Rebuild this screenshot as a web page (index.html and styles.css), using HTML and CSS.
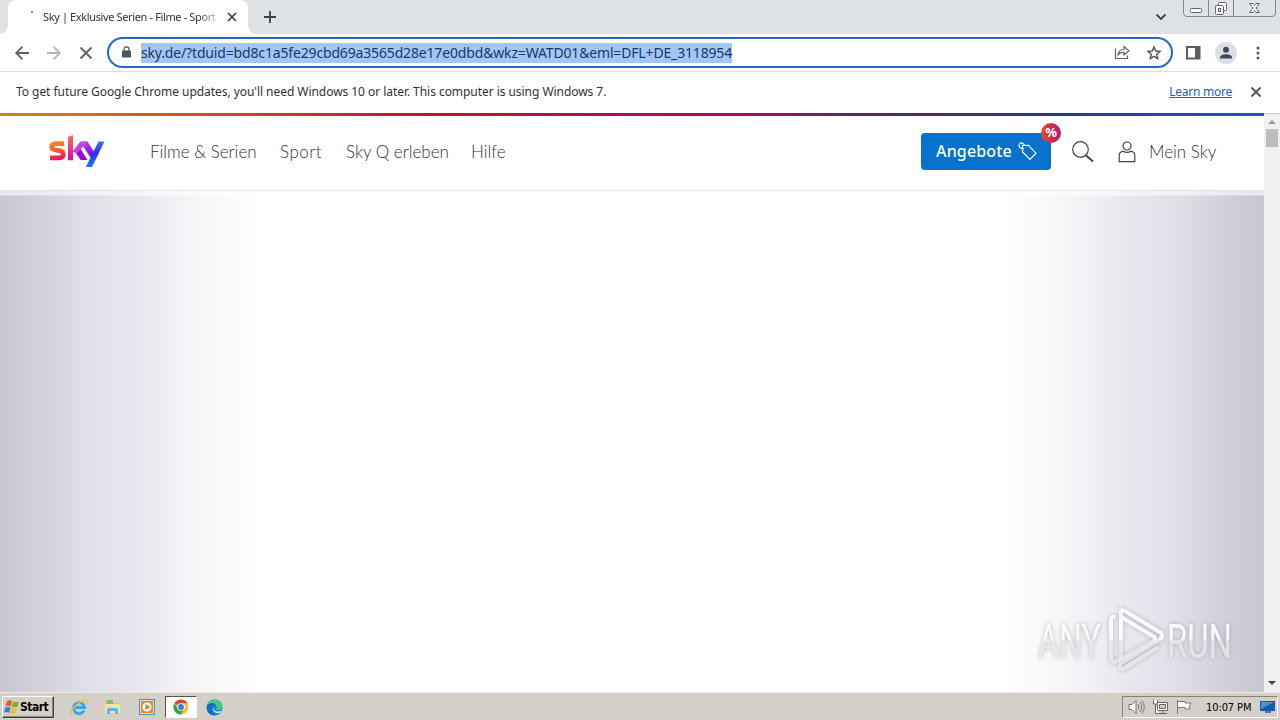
FILE: index.html
```html
<!DOCTYPE html>
<html lang="de">
<head>
<meta charset="utf-8">
<title>Sky | Exklusive Serien - Filme - Sport</title>
<link rel="stylesheet" href="styles.css">
</head>
<body>
<div class="tabstrip">
  <div class="tab">
    <span class="spinner"></span>
    <span class="tab-title">Sky | Exklusive Serien - Filme - Sport</span>
    <svg class="tab-close" width="10" height="10" viewBox="0 0 10 10"><path d="M1 1l8 8M9 1l-8 8" stroke="#3c4043" stroke-width="1.700"/></svg>
  </div>
  <svg class="new-tab" width="14" height="14" viewBox="0 0 14 14"><path d="M7 1v12M1 7h12" stroke="#3c4043" stroke-width="1.800"/></svg>
  <svg class="tab-search" width="12" height="8" viewBox="0 0 12 8"><path d="M1.500 1.500L6 6l4.500-4.500" fill="none" stroke="#3c4043" stroke-width="1.800"/></svg>
  <svg class="window-buttons" width="94" height="18" viewBox="0 0 94 18">
    <path d="M.5 0v13q0 3.500 3.500 3.500h85q3.500 0 3.500-3.500V0M25.500 0v16M50.500 0v16" fill="#dfe2e7" stroke="#85888e"/>
    <rect x="7.500" y="8.500" width="11" height="4" rx="1" fill="#fff" stroke="#62656b"/>
    <rect x="35.500" y="2.500" width="8" height="8" rx="1" fill="#fff" stroke="#62656b"/>
    <rect x="32.500" y="5.500" width="8" height="9" rx="1" fill="#fff" stroke="#62656b"/>
    <rect x="35.500" y="8.500" width="2" height="3" fill="#fff" stroke="#62656b"/>
    <path d="M66.500 3.500h3.500l1.500 2 1.500-2h3.500l-3.300 4.500 3.300 4.500H73l-1.500-2-1.500 2h-3.500L69.800 8z" fill="#fff" stroke="#62656b"/>
  </svg>
</div>
<div class="toolbar">
  <svg class="nav-icons" width="80" height="16" viewBox="0 0 80 16" fill="none" stroke="#5f6266" stroke-width="1.800">
    <path d="M15 8H2M8.500 1.700L2.200 8l6.300 6.300"/>
    <path d="M33 8h12.500M39.500 1.700L45.800 8l-6.300 6.300" stroke="#b4b6b9"/>
    <path d="M66.500 2.500l11 11M77.500 2.500l-11 11"/>
  </svg>
  <div class="omnibox">
    <svg class="lock" width="10" height="13" viewBox="0 0 10 13"><rect x="1" y="4.500" width="9" height="7" rx="1" fill="#505357"/><path d="M3 5V3.300a2.500 2.500 0 0 1 5 0V5" fill="none" stroke="#505357" stroke-width="1.200"/></svg>
    <span class="url">sky.de/?tduid=bd8c1a5fe29cbd69a3565d28e17e0dbd&amp;wkz=WATD01&amp;eml=DFL+DE_3118954</span>
    <svg class="share" width="16" height="15" viewBox="0 0 16 15" fill="none" stroke="#5f6368" stroke-width="1.200"><path d="M1.500 3.500v10h12v-3M4 9.500c.5-3.500 2.800-5 6-5V1.500l5 4.300-5 4.200V7.300c-2.600 0-4.500.4-6 2.200z"/></svg>
    <svg class="star" width="16" height="16" viewBox="0 0 16 16"><path d="M8 2l1.700 4 4.300.4-3.300 2.900 1 4.200L8 11.300l-3.700 2.200 1-4.200L2 6.400 6.300 6z" fill="none" stroke="#505357" stroke-width="1.400"/></svg>
  </div>
  <svg class="side-panel" width="15" height="14" viewBox="0 0 15 14"><path d="M1 1h12.500v11.500H1z" fill="#fff" stroke="#5a5d61" stroke-width="2"/><path d="M9 1h5v12H9z" fill="#5a5d61"/></svg>
  <svg class="avatar" width="22" height="22" viewBox="0 0 22 22"><circle cx="11" cy="11" r="11" fill="#dcdfe4"/><circle cx="11" cy="7.800" r="3" fill="#3f4a67"/><path d="M5 16.500v-1.200c0-4 12-4 12 0v1.200z" fill="#3f4a67"/></svg>
  <svg class="menu-dots" width="4" height="14" viewBox="0 0 4 14" fill="#505357"><circle cx="2" cy="2" r="1.500"/><circle cx="2" cy="7" r="1.500"/><circle cx="2" cy="12" r="1.500"/></svg>
</div>
<div class="infobar">
  <span class="info-text">To get future Google Chrome updates, you'll need Windows 10 or later. This computer is using Windows 7.</span>
  <a class="learn">Learn more</a>
  <svg width="12" height="12" viewBox="0 0 12 12"><path d="M1.500 1.500l9 9M10.500 1.500l-9 9" stroke="#55585c" stroke-width="1.900"/></svg>
</div>
<div class="viewport">
  <div class="page">
    <div class="rainbow"></div>
    <header class="site-header">
      <svg class="logo" width="58" height="36" viewBox="0 0 58 36" fill="none">
        <defs>
          <linearGradient id="s" gradientUnits="userSpaceOnUse" x1="0" y1="8" x2="4" y2="28"><stop offset="0" stop-color="#f7962c"/><stop offset=".5" stop-color="#f6602f"/><stop offset="1" stop-color="#ea1266"/></linearGradient>
          <linearGradient id="k" gradientUnits="userSpaceOnUse" x1="0" y1="2" x2="0" y2="28"><stop offset="0" stop-color="#f27454"/><stop offset=".45" stop-color="#f04078"/><stop offset="1" stop-color="#d800c0"/></linearGradient>
          <linearGradient id="y" gradientUnits="userSpaceOnUse" x1="50" y1="8" x2="46" y2="34"><stop offset="0" stop-color="#3f73ff"/><stop offset=".5" stop-color="#2234f5"/><stop offset="1" stop-color="#1b78f0"/></linearGradient>
          <linearGradient id="v" gradientUnits="userSpaceOnUse" x1="34" y1="9" x2="46" y2="24"><stop offset="0" stop-color="#c95ae8"/><stop offset=".5" stop-color="#9a20e8"/><stop offset="1" stop-color="#5a10ea"/></linearGradient>
        </defs>
        <path d="M16 10.700H7.500c-5 0-5 5.500 0 6.300l4 .6c5 .8 5 7.200 0 7.200H2" stroke="url(#s)" stroke-width="4.800"/>
        <path d="M27 18.500l5-3.500 7.500 12h-6.800z" fill="#9a08dd"/>
        <path d="M24 19L32.500 8.500h6.800L29.500 20z" fill="#cf3fe0"/>
        <path d="M20 4l5-2v25.200h-5z" fill="url(#k)"/>
        <path d="M35 8.500h4.500L48 22l-3.500 5.500-10-15z" fill="url(#v)"/>
        <path d="M50.500 8.500h6L44 34h-6.200z" fill="url(#y)"/>
      </svg>
      <nav class="nav"><span class="n1">Filme &amp; Serien</span><span class="n2">Sport</span><span class="n3">Sky Q erleben</span><span class="n4">Hilfe</span></nav>
      <div class="offers"><span class="offers-text">Angebote</span>
        <svg width="19" height="19" viewBox="0 0 19 19" fill="none" stroke="#fff" stroke-width="1.200"><path d="M4.500 3.500l6-.2 7.500 7.900-6 6.300-7.500-7.600zM6 7C2 6.500 0 4 1.500 2S6 1 6.500 4"/></svg>
        <span class="badge">%</span>
      </div>
      <svg class="search" width="24" height="24" viewBox="0 0 24 24" fill="none" stroke="#444"><circle cx="9.500" cy="9.500" r="7.800" stroke-width="1.200"/><path d="M15 15.500l7 6" stroke-width="2"/></svg>
      <svg class="user" width="18" height="22" viewBox="0 0 18 22" fill="none" stroke="#444" stroke-width="1.200"><circle cx="9" cy="5" r="4"/><path d="M1.200 20.700v-6c0-2.500 1.500-4 4-4.500 2 1.500 5.600 1.500 7.600 0 2.500.5 4 2 4 4.500v6z"/></svg>
      <span class="account">Mein Sky</span>
    </header>
    <main class="stage">
      <svg class="watermark" width="200" height="66" viewBox="0 0 200 66">
        <defs><linearGradient id="wm" gradientUnits="userSpaceOnUse" x1="0" y1="0" x2="0" y2="66"><stop offset=".48" stop-color="#fff" stop-opacity=".9"/><stop offset=".52" stop-color="#ececef" stop-opacity=".8"/></linearGradient></defs>
        <g fill="url(#wm)" font-family="Roboto, sans-serif" font-size="49"><text x="2" y="51" textLength="63" lengthAdjust="spacingAndGlyphs">ANY</text><text x="131" y="51" textLength="65" lengthAdjust="spacingAndGlyphs">RUN</text></g>
        <g fill="none" stroke="url(#wm)" stroke-width="4" stroke-linejoin="round"><path d="M79 10q-4-1-4 3v38q0 4 4 4l42-23"/><path d="M120 31L85 10v44M85 10V5q0-3 4-1l36 22q3 3-1 5"/><path d="M83 57l40-24q5-3 2-6M84 57q-1 7 5 4l33-21"/></g>
      </svg>
    </main>
  </div>
  <div class="scrollbar"><i class="up"></i><i class="thumb"></i><i class="down"></i></div>
</div>
<div class="taskbar">
  <div class="start">
    <svg width="16" height="16" viewBox="0 0 16 16"><path d="M3 2q3-1.500 5 .2L6.800 7.500Q4.500 6 1.500 7.300z" fill="#ea5a22"/><path d="M9 2.600q3 1.400 6-.1l-1.500 5.200q-3 1.300-5.700 0z" fill="#75b62e"/><path d="M1.200 8.500q3-1.300 5.300.2L5.200 14Q2.800 12.400 0 13.700z" fill="#2b83d2"/><path d="M7.500 9q3 1.300 5.700 0l-1.500 5.300q-3 1.300-5.600 0z" fill="#f6bd25"/></svg><span>Start</span>
  </div>
  <div class="quick">
    <svg class="ie" width="18" height="18" viewBox="0 0 18 18" fill="none"><path d="M14 12.500A5.500 5.500 0 1 1 14.500 9.500H5" stroke="#35a5e5" stroke-width="2.800"/><path d="M1.500 16C-1 12 12 1 16.500 2.500c1 .4.500 2-.5 3" stroke="#edbd32" stroke-width="1.400"/></svg>
    <svg class="folder" width="17" height="16" viewBox="0 0 17 16"><path d="M1 2h6l1 2h7v10H1z" fill="#e8bf55"/><path d="M3 1h6v5H3z" fill="#7ec065"/><path d="M1 5h15v9H1z" fill="#fae69a"/><path d="M3 15v-4q0-2 2-2h7q2 0 2 2v4h-3v-3H6v3z" fill="#68b4df"/></svg>
    <svg class="media" width="16" height="16" viewBox="0 0 16 16"><rect x=".5" y=".5" width="15" height="15" fill="#c1e3f5" stroke="#4c96c9"/><rect x="2" y="2" width="12" height="12" fill="#f18a20"/><circle cx="8" cy="8" r="4.500" fill="#fff"/><path d="M6.500 5l5 3-5 3z" fill="#ee7414"/></svg>
    <div class="active-app"><svg width="16" height="16" viewBox="0 0 16 16"><circle cx="8" cy="8" r="7.500" fill="#fac62d"/><path d="M8 8L1.500 4.200A7.500 7.500 0 0 1 14.500 4.200H8z" fill="#dc4335"/><path d="M1.500 4.200A7.500 7.500 0 0 0 8 15.500L11.200 10 8 8 4.800 10z" fill="#30a150"/><circle cx="8" cy="8" r="3.800" fill="#fff"/><circle cx="8" cy="8" r="2.900" fill="#377ce5"/></svg></div>
    <svg class="edge" width="17" height="17" viewBox="0 0 17 17"><circle cx="8.500" cy="8.500" r="8" fill="#1684d5"/><path d="M.8 7.500C2-1.500 15-1.500 16.500 7c.4 3.500-3 5-6.500 3.700 2-3-.5-5-3-5C4 5.500 2 6 .8 7.500z" fill="#40c78c"/><path d="M.8 7C4 2 10 4 10.500 7.500 9 5.500 5 6.500 5 10c0 3 2 5 5 5.700C4 18 0 12 .8 7z" fill="#1969bd"/><path d="M8 8c-1.500 3.500 3 6 7.500 3.500l-1 2C9.500 15.500 5.500 12 8 8z" fill="#fff" opacity=".8"/></svg>
  </div>
  <div class="tray">
    <svg class="sound" width="17" height="16" viewBox="0 0 17 16" fill="none" stroke="#777"><path d="M1 5.500h3l4-4v13l-4-4H1z" fill="#fff"/><path d="M10 5q2 3 0 6M12 3q3.500 5 0 10M14 1.500q4.500 6.500 0 13"/></svg>
    <svg class="network" width="17" height="16" viewBox="0 0 17 16" fill="#fff" stroke="#666"><path d="M5.500 3.500h10v8h-10zM7 14.500h8M11 12v2"/><path d="M1.500 1v4h4V1M3.500 5v9.500h3" /><path d="M7.500 5.500h6v4h-6z" fill="#ccc"/></svg>
    <svg class="flag" width="17" height="16" viewBox="0 0 17 16"><path d="M1.500 15V1M2 2.500h7v1.500h6l-2 4 1 2H9V8.500H2" fill="#fff" stroke="#777"/></svg>
    <span class="clock">10:07 PM</span>
    <svg class="desktop" width="16" height="14" viewBox="0 0 16 14"><path d="M0 1h15v10H0z" fill="#165cb2"/><path d="M1 2h13L1 9z" fill="#4b91d4"/><path d="M5 11h6v2H5z" fill="#5b7898"/></svg>
  </div>
</div>
</body>
</html>
```

FILE: styles.css
```css
* { box-sizing: border-box; }
body { margin: 0; width: 1280px; height: 720px; overflow: hidden; display: flex; flex-direction: column; background: #fff; color: #303236; font-family: "Noto Sans", sans-serif; }
svg { display: block; flex: none; }
span, a { white-space: nowrap; }

.tabstrip { flex: none; height: 34px; background: #dee1e6; display: flex; padding-left: 8px; }
.tab { position: relative; width: 240px; height: 34px; background: #fff; border-radius: 8px 8px 0 0; display: flex; align-items: center; }
.tab::before, .tab::after { content: ""; position: absolute; bottom: 0; width: 8px; height: 8px; }
.tab::before { left: -8px; background: radial-gradient(circle at 0 0, #dee1e6 7.5px, #fff 8px); }
.tab::after { right: -8px; background: radial-gradient(circle at 100% 0, #dee1e6 7.5px, #fff 8px); }
.spinner { width: 2px; height: 2px; margin: -10px 10px 0 23px; background: #66696e; border-radius: 1px; }
.tab-title { width: 175px; font: 11px/18px "Noto Sans", sans-serif; letter-spacing: -.37px; -webkit-mask-image: linear-gradient(90deg, #000 155px, #0003 175px); }
.tab-close { margin-left: 9px; }
.new-tab { margin: 10px 0 0 15px; }
.tab-search { margin: 13px 0 0 auto; }
.window-buttons { margin: 0 3px 0 16px; }

.toolbar { flex: none; height: 38px; border-bottom: 1px solid #dadce0; display: flex; align-items: center; padding-left: 14px; }
.omnibox { width: 1066px; height: 31px; margin: 0 13px 0 13px; border: 2px solid #2468c8; border-radius: 16px; display: flex; align-items: center; padding-left: 12px; }
.url { margin-left: 10px; height: 20px; background: #a2c6fa; color: #17395e; font: 14px/20px "Noto Sans", sans-serif; letter-spacing: -.16px; }
.share { margin-left: auto; }
.star { margin: 0 9px 0 16px; }
.avatar { margin-left: 14px; }
.menu-dots { margin-left: 19px; }

.infobar { flex: none; height: 41px; display: flex; align-items: center; padding: 0 18px 2px 16px; font-size: 12px; }
.info-text { letter-spacing: -.05px; }
.learn { margin: 0 18px 0 auto; color: #2262bc; text-decoration: underline; letter-spacing: -.25px; }

.viewport { flex: 1; min-height: 0; display: flex; }
.page { width: 1264px; display: flex; flex-direction: column; }
.rainbow { height: 3px; background: linear-gradient(90deg, #cf8420 0, #cf3d18 22%, #bf1624 34%, #b01050 46%, #ad086f 57%, #54266f 71%, #26398c 84%, #145ccb 100%); }
.site-header { height: 75px; border-bottom: 1px solid #e3e3e6; display: flex; align-items: center; padding: 0 49px 3px; font: 300 17px/24px Lato, sans-serif; }
.logo { margin-top: -1px; margin-left: -1px; }
.nav { display: flex; margin-left: 44px; }
.n1 { width: 130px; } .n2 { width: 66px; letter-spacing: .5px; } .n3 { width: 125px; } .n4 { width: 34px; }
.offers { position: relative; width: 130px; height: 37px; margin: -1px 0 0 auto; padding: 0 14px 0 15px; display: flex; align-items: center; justify-content: space-between; border-radius: 4px; background: #0672cb; color: #fff; font: 500 16px "Noto Sans", sans-serif; }
.offers-text { letter-spacing: .15px; }
.badge { position: absolute; right: -10px; top: -10px; width: 20px; height: 20px; border-radius: 50%; background: linear-gradient(90deg, #ea4b20, #b31485); font: bold 13px/19px "Noto Sans", sans-serif; text-align: center; }
.search { margin-left: 20px; }
.user { margin-left: 23px; }
.account { margin-left: 13px; width: 66px; }
.stage { flex: 1; display: flex; justify-content: flex-end; align-items: flex-end; padding: 0 28px 19px 0; background: linear-gradient(180deg, #ffffff99 4px, #ffffff00 5px), linear-gradient(90deg, #c9c8d2 0, #d3d2dc 45px, #e2e1eb 90px, #e9e8f0 140px, #f7f7f9 200px, #fff 258px, #fff 1008px, #f5f5f8 1070px, #e9e8ef 1125px, #e1e0e9 1175px, #d3d2dc 1220px, #c7c6d0 1264px); }
.watermark { filter: drop-shadow(0 0 2px #77778088); }
.scrollbar { width: 16px; background: #f1f1f1; display: flex; flex-direction: column; align-items: center; border-top: 1px solid #ccc; }
.up, .down { border: 4px solid transparent; width: 0; height: 0; }
.up { border-bottom-color: #999; border-top: 0; margin-top: 6px; }
.thumb { width: 12px; height: 18px; margin-top: 5px; background: #bdbdbd; }
.down { border-top: 4px solid #444; border-bottom: 0; margin: auto 0 7px; }

.taskbar { flex: none; height: 28px; background: #d4d0c8; border-top: 1px solid #ece9e3; display: flex; align-items: center; padding: 1px 2px 0; font-family: "DejaVu Sans Condensed", sans-serif; color: #000; }
.start { width: 52px; height: 22px; display: flex; align-items: center; padding-left: 1px; border: 1px solid; border-color: #fff #404040 #404040 #fff; box-shadow: inset -1px -1px #89857e; font: bold 12px "DejaVu Sans Condensed", sans-serif; }
.start span { margin-left: 0; letter-spacing: -.5px; }
.quick { display: flex; align-items: center; margin-left: 16px; }
.folder { margin-left: 16px; }
.media { margin-left: 18px; }
.active-app { width: 32px; height: 22px; margin-left: 10px; border: 1px solid; border-color: #55524d #fff #fff #55524d; background: #fff; display: flex; align-items: center; justify-content: center; }
.edge { margin-left: 9px; }
.tray { margin-left: auto; width: 156px; height: 22px; border: 1px solid; border-color: #87837c #fff #fff #87837c; display: flex; align-items: center; padding-left: 5px; }
.network { margin-left: 7px; }
.flag { margin-left: 7px; }
.clock { margin-left: 13px; width: 46px; font-size: 11px; letter-spacing: -.1px; }
.desktop { margin-left: 8px; }
```
